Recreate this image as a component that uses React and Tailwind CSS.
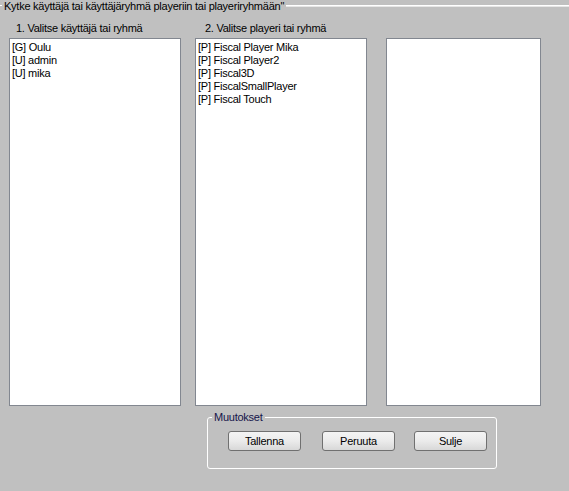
import React from "react";

const users = ["[G] Oulu", "[U] admin", "[U] mika"];
const players = [
  "[P] Fiscal Player Mika",
  "[P] Fiscal Player2",
  "[P] Fiscal3D",
  "[P] FiscalSmallPlayer",
  "[P] Fiscal Touch",
];

function ListBox({ items, width }) {
  return (
    <div
      className={`${width} h-[368px] bg-white border border-[#828790] pt-[2px] pl-[2px]`}
    >
      {items.map((item) => (
        <div key={item} className="h-[13px] leading-[13px] whitespace-nowrap">
          {item}
        </div>
      ))}
    </div>
  );
}

function WinButton({ children, className = "" }) {
  return (
    <button
      className={`w-[73px] h-[20px] rounded-[3px] border border-[#707070] bg-gradient-to-b from-[#f4f4f4] via-[#ebebeb] to-[#d8d8d8] text-[11px] leading-[18px] tracking-[-0.25px] text-black ${className}`}
    >
      {children}
    </button>
  );
}

export default function App() {
  return (
    <div
      className="w-[569px] h-[491px] bg-[#c0c0c0] overflow-hidden text-[11px] tracking-[-0.25px] text-black flex flex-col"
      style={{ fontFamily: '"Liberation Sans", Arial, sans-serif' }}
    >
      {/* top group box edge */}
      <div className="flex items-start h-[12px]">
        <div className="w-[2px] h-[1px] mt-[5px] bg-white" />
        <div className="px-[2px] leading-[12px] whitespace-nowrap">
          Kytke käyttäjä tai käyttäjäryhmä playeriin tai playeriryhmään"
        </div>
        <div className="flex-1 h-[2px] mt-[5px] border-t border-white bg-[#e6e6e6]" />
      </div>

      <div className="flex h-[16px] mt-[10px] leading-[13px]">
        <div className="ml-[16px] w-[189px]">1. Valitse käyttäjä tai ryhmä</div>
        <div>2. Valitse playeri tai ryhmä</div>
      </div>

      <div className="flex pl-[9px]">
        <ListBox items={users} width="w-[172px]" />
        <div className="w-[14px]" />
        <ListBox items={players} width="w-[172px]" />
        <div className="w-[19px]" />
        <ListBox items={[]} width="w-[155px]" />
      </div>

      <div className="relative ml-[207px] mt-[11px] w-[290px] h-[52px] border border-white rounded-[3px]">
        <div className="absolute -top-[7px] left-[4px] px-[2px] bg-[#c0c0c0] leading-[12px] text-[#14144a]">
          Muutokset
        </div>
        <div className="flex mt-[13px] ml-[20px]">
          <WinButton>Tallenna</WinButton>
          <WinButton className="ml-[21px]">Peruuta</WinButton>
          <WinButton className="ml-[19px]">Sulje</WinButton>
        </div>
      </div>
    </div>
  );
}
